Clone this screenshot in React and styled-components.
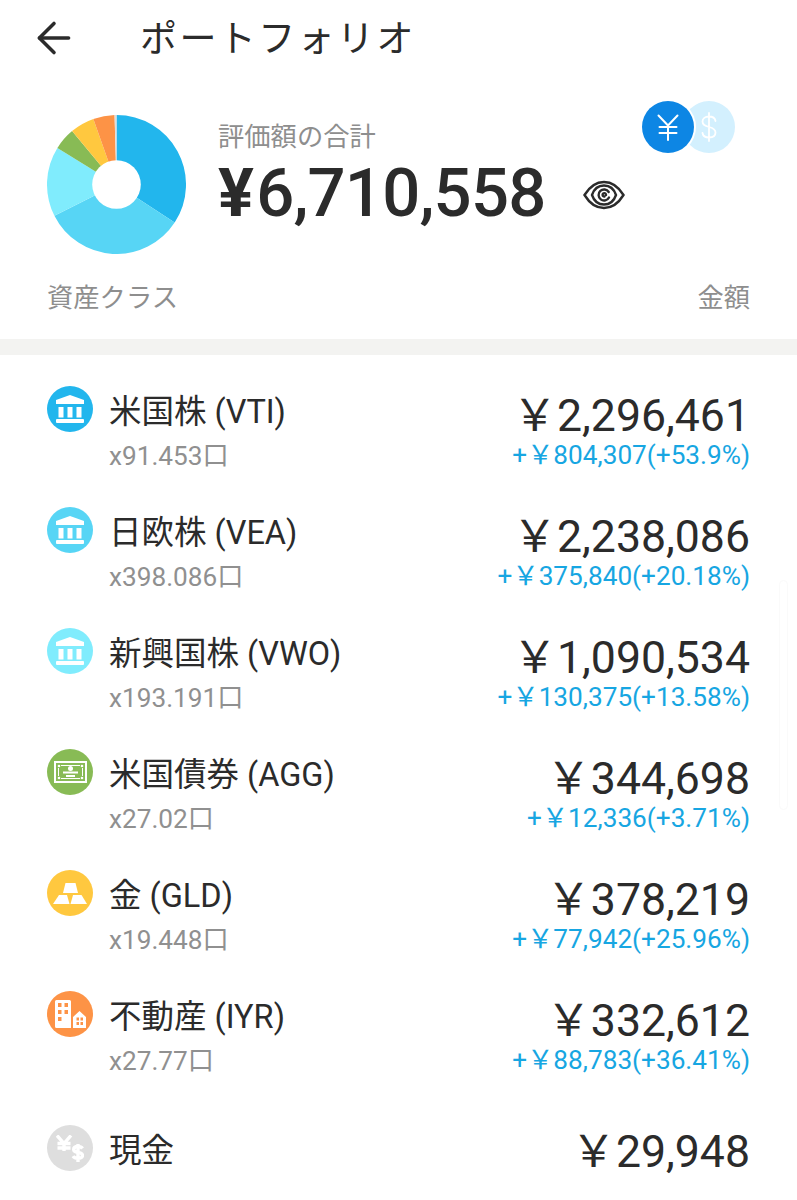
import React from "react"
import styled, { createGlobalStyle } from "styled-components"
import { ArrowLeft } from "lucide-react"

const GlobalStyle = createGlobalStyle`
  body {
    margin: 0;
    background: #fff;
    font-family: Roboto, "Noto Sans CJK JP", sans-serif;
    color: #2b2b2b;
  }
`

const Page = styled.div`
  position: relative;
  width: 797px;
  height: 1200px;
  overflow: hidden;
  background: #fff;
`

const Header = styled.header`
  display: flex;
  align-items: center;
  height: 76px;
  padding-left: 29px;
  color: #2b2b2b;
`

const Title = styled.h1`
  margin: 3px 0 0 61px;
  font-size: 37px;
  font-weight: 400;
  letter-spacing: 2.4px;
  line-height: 76px;
`

const Summary = styled.section`
  position: relative;
  display: flex;
  align-items: flex-start;
  padding: 39px 47px 0;
  height: 166px;
`

const TotalBlock = styled.div`
  margin-left: 32px;
  padding-top: 4px;
`

const TotalLabel = styled.div`
  font-size: 26.3px;
  line-height: 36px;
  color: #8e8e8e;
`

const TotalRow = styled.div`
  display: flex;
  align-items: center;
  margin-top: 2px;
`

const TotalValue = styled.div`
  font-size: 67px;
  font-weight: 500;
  line-height: 72px;
  letter-spacing: -0.8px;
`

const YenMark = styled.span`
  margin-right: 3px;
  font-weight: 700;
`

const EyeButton = styled.div`
  display: flex;
  margin-left: 38px;
  margin-top: 4px;
`

const CurrencyToggle = styled.div`
  position: absolute;
  top: 25px;
  left: 642px;
  width: 94px;
  height: 52px;
`

const Coin = styled.div`
  position: absolute;
  top: 0;
  left: ${({ $front }) => ($front ? "0" : "41px")};
  z-index: ${({ $front }) => ($front ? 2 : 1)};
  display: flex;
  align-items: center;
  justify-content: center;
  box-sizing: border-box;
  width: 52px;
  height: 52px;
  border-radius: 50%;
  background: ${({ $front }) => ($front ? "#0d86e4" : "#d3f0fe")};
  box-shadow: ${({ $front }) => ($front ? "0 0 0 2px #fff" : "none")};
`

const ColumnHead = styled.div`
  display: flex;
  justify-content: space-between;
  padding: 0 47px;
  margin-top: -1px;
  font-size: 26.3px;
  line-height: 36px;
  color: #8e8e8e;
`

const Divider = styled.div`
  height: 16px;
  margin-top: 23px;
  background: #f3f3f1;
`

const List = styled.div`
  padding: 26px 47px 0;
`

const Row = styled.div`
  display: flex;
  justify-content: space-between;
  height: 121px;
  margin-top: ${({ $solo }) => ($solo ? "13px" : "0")};
`

const RowLeft = styled.div`
  display: flex;
  align-items: flex-start;
  gap: 16px;
`

const IconCircle = styled.div`
  display: flex;
  align-items: center;
  justify-content: center;
  width: 46px;
  height: 46px;
  margin-top: 5px;
  border-radius: 50%;
  background: ${({ $color }) => $color};
`

const Name = styled.div`
  font-size: 32.5px;
  line-height: 46px;
  margin-top: 8px;
`

const Units = styled.div`
  font-size: 26.2px;
  line-height: 32px;
  margin-top: 5px;
  color: #909090;
`

const RowRight = styled.div`
  text-align: right;
`

const Amount = styled.div`
  font-size: 44.6px;
  line-height: 52px;
  margin-top: ${({ $solo }) => ($solo ? "6px" : "9px")};
`

const Delta = styled.div`
  font-size: 26.2px;
  line-height: 30px;
  margin-top: -2px;
  color: #17a6e2;
`

const ScrollTrack = styled.div`
  position: absolute;
  top: 580px;
  left: 779px;
  box-sizing: border-box;
  width: 9px;
  height: 230px;
  border: 1px solid #fafafa;
  border-radius: 5px;
`

const assets = [
  { name: "米国株 (VTI)", units: "x91.453口", amount: 2296461, delta: "+￥804,307(+53.9%)", color: "#22b6ed", icon: "bank" },
  { name: "日欧株 (VEA)", units: "x398.086口", amount: 2238086, delta: "+￥375,840(+20.18%)", color: "#57d5f5", icon: "bank" },
  { name: "新興国株 (VWO)", units: "x193.191口", amount: 1090534, delta: "+￥130,375(+13.58%)", color: "#80ecfd", icon: "bank" },
  { name: "米国債券 (AGG)", units: "x27.02口", amount: 344698, delta: "+￥12,336(+3.71%)", color: "#88bb55", icon: "bond" },
  { name: "金 (GLD)", units: "x19.448口", amount: 378219, delta: "+￥77,942(+25.96%)", color: "#ffc83f", icon: "gold" },
  { name: "不動産 (IYR)", units: "x27.77口", amount: 332612, delta: "+￥88,783(+36.41%)", color: "#fd9346", icon: "estate" },
  { name: "現金", amount: 29948, color: "#dedede", icon: "cash" },
]

const total = assets.reduce((sum, a) => sum + a.amount, 0)

const polar = (cx, cy, r, turn) => {
  const angle = turn * 2 * Math.PI
  return [cx + r * Math.sin(angle), cy - r * Math.cos(angle)]
}

const Donut = () => {
  let start = 0
  return (
    <svg width="139" height="139" viewBox="0 0 139 139" style={{ flexShrink: 0 }}>
      {assets.map((a) => {
        const end = start + a.amount / total
        const [x0, y0] = polar(69.5, 69.5, 69.5, start)
        const [x1, y1] = polar(69.5, 69.5, 69.5, end)
        const large = end - start > 0.5 ? 1 : 0
        start = end
        return <path key={a.name} d={`M69.5 69.5L${x0} ${y0}A69.5 69.5 0 ${large} 1 ${x1} ${y1}Z`} fill={a.color} />
      })}
      <circle cx="69.5" cy="69.5" r="24.3" fill="#fff" />
    </svg>
  )
}

const EyeIcon = () => (
  <svg width="42" height="30" viewBox="0 0 42 30" fill="none" stroke="#2b2b2b" strokeWidth="2.4" strokeLinecap="round">
    <path d="M1.500 15C7 6 14 2 21 2s14 4 19.500 13C35 24 28 28 21 28S7 24 1.500 15Z" />
    <path d="M9 15c2-6 6.500-9.500 12-9.500S31 9 33 15c-2 6-6.500 9.500-12 9.500S11 21 9 15Z" />
    <path d="M26 17.500a5.500 5.500 0 1 1-.3-5.500M21.500 16.500a1.700 1.700 0 1 1 1.500-1.500" />
  </svg>
)

const YenGlyph = () => (
  <svg width="22" height="27" viewBox="0 0 22 27" fill="none" stroke="#fff" strokeWidth="2" strokeLinecap="round">
    <path d="M1.500 1.500L11 11.500l9.500-10M11 11.500V26M2.500 13h17M2.500 19h17" />
  </svg>
)

const DollarGlyph = () => (
  <svg width="16" height="30" viewBox="0 0 16 30" fill="none" stroke="#fff" strokeWidth="1.800" strokeLinecap="round">
    <path d="M14.500 9c-.5-3-3-4.500-6.500-4.500-4 0-6.500 2-6.500 5S4 14 8 15s6.500 2.500 6.500 5.500-2.500 5-6.500 5c-3.500 0-6-1.500-6.500-4.500M8 1v28" />
  </svg>
)

const BankIcon = () => (
  <svg width="28" height="28" viewBox="0 0 28 28" fill="#fff">
    <path d="M14 0L28 5v4H0V5z" />
    <rect x="2.500" y="12" width="5" height="10.500" />
    <rect x="11.500" y="12" width="5" height="10.500" />
    <rect x="20.500" y="12" width="5" height="10.500" />
    <rect x="0" y="24" width="28" height="4" rx="1" />
  </svg>
)

const BondIcon = () => (
  <svg width="33" height="22" viewBox="0 0 33 22" fill="none" stroke="#fff">
    <rect x="1" y="1" width="31" height="20" strokeWidth="2" />
    <path d="M7 4.500h19M7 17.500h19M4.500 7v8M28.500 7v8" strokeWidth="1" />
    <g fill="#fff" stroke="none">
      <circle cx="5" cy="5" r="1.300" />
      <circle cx="28" cy="5" r="1.300" />
      <circle cx="5" cy="17" r="1.300" />
      <circle cx="28" cy="17" r="1.300" />
      <circle cx="16.500" cy="7.500" r="2.500" />
    </g>
    <path d="M9 11.500h15M12 15h9" strokeWidth="2" />
  </svg>
)

const GoldIcon = () => (
  <svg width="34" height="21" viewBox="0 0 34 21" fill="#fff">
    <path d="M12.500 0h10L25 10H10z" />
    <path d="M6 12h8l2.500 9H0z" />
    <path d="M20 12h8.500l5.500 9H17.500z" />
  </svg>
)

const EstateIcon = () => (
  <svg width="31" height="28" viewBox="0 0 31 28">
    <path fill="#fff" fillRule="evenodd" d="M0 1.500A1.500 1.500 0 0 1 1.500 0h13A1.500 1.500 0 0 1 16 1.500V28H1.500A1.500 1.500 0 0 1 0 26.500zM3 3v4h3.500V3zM9.500 3v4H13V3zM3 10v4h3.500v-4zM9.500 10v4H13v-4zM3 17v4h3.500v-4z" />
    <path fill="#fff" fillRule="evenodd" d="M18 17l6.500-6 6.500 6v11H18zM21.500 17.500v3h2.500v-3zM25.500 17.500v3H28v-3zM21.500 22v3h2.500v-3zM25.500 22v3H28v-3z" />
  </svg>
)

const CashIcon = () => (
  <svg width="28" height="27" viewBox="0 0 28 27" fill="none" stroke="#fff" strokeWidth="3.400">
    <path d="M1 .5l7 8 7-8M8 8v8M1.500 8.500h13M1.500 13h13" />
    <path d="M26.500 13.500c-1-1.500-2.500-2-4.500-2-2.700 0-4.300 1.100-4.300 2.900s1.600 2.500 4.300 3 4.500 1.200 4.500 3-2 3-4.500 3c-2 0-4-.6-5-2.200M22 9v18" />
  </svg>
)

const icons = { bank: BankIcon, bond: BondIcon, gold: GoldIcon, estate: EstateIcon, cash: CashIcon }

const App = () => (
  <Page>
    <GlobalStyle />
    <Header>
      <ArrowLeft size={50} strokeWidth={1.7} />
      <Title>ポートフォリオ</Title>
    </Header>
    <Summary>
      <Donut />
      <TotalBlock>
        <TotalLabel>評価額の合計</TotalLabel>
        <TotalRow>
          <TotalValue><YenMark>¥</YenMark>6,710,558</TotalValue>
          <EyeButton><EyeIcon /></EyeButton>
        </TotalRow>
      </TotalBlock>
      <CurrencyToggle>
        <Coin $front><YenGlyph /></Coin>
        <Coin><DollarGlyph /></Coin>
      </CurrencyToggle>
    </Summary>
    <ColumnHead>
      <span>資産クラス</span>
      <span>金額</span>
    </ColumnHead>
    <Divider />
    <List>
      {assets.map((a) => {
        const Icon = icons[a.icon]
        const solo = !a.units
        return (
          <Row key={a.name} $solo={solo}>
            <RowLeft>
              <IconCircle $color={a.color}><Icon /></IconCircle>
              <div>
                <Name>{a.name}</Name>
                {a.units && <Units>{a.units}</Units>}
              </div>
            </RowLeft>
            <RowRight>
              <Amount $solo={solo}>￥{a.amount.toLocaleString("en-US")}</Amount>
              {a.delta && <Delta>{a.delta}</Delta>}
            </RowRight>
          </Row>
        )
      })}
    </List>
    <ScrollTrack />
  </Page>
)

export default App
